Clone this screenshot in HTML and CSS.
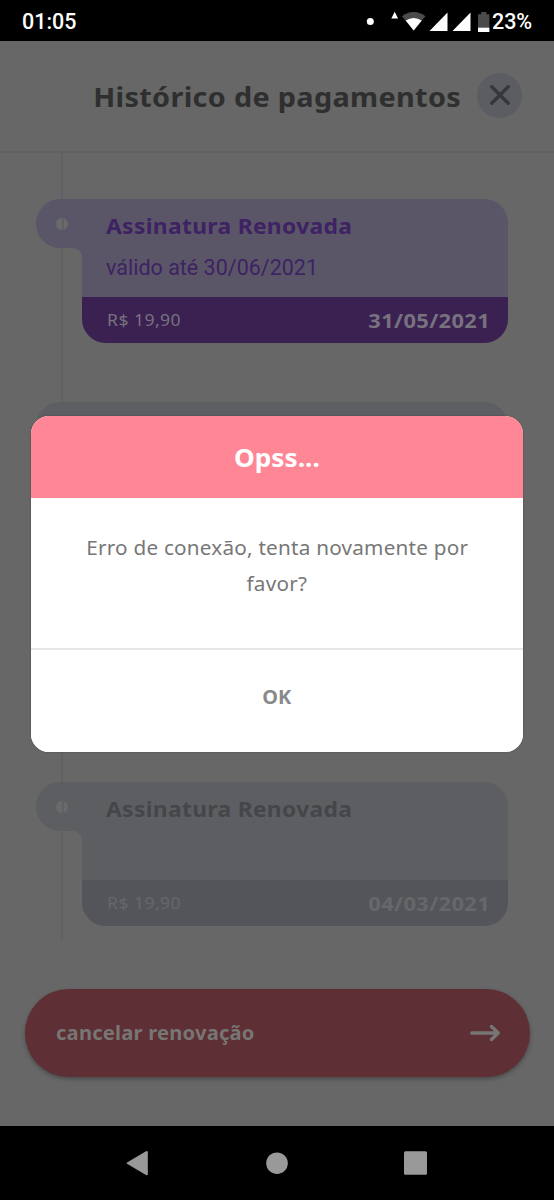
FILE: index.html
```html
<!DOCTYPE html>
<html lang="pt-BR">
<head>
<meta charset="utf-8">
<title>Histórico de pagamentos</title>
<link rel="stylesheet" href="styles.css">
</head>
<body>
<div class="phone">
  <div class="status">
    <span class="clock">01:05</span>
    <svg class="status-icons" width="126" height="24" viewBox="364 9 126 24">
      <circle cx="370.3" cy="20.5" r="3.5" fill="#fff"/>
      <path d="M391.3 17.5l3.4-6.8 3.4 6.8z" fill="#fff"/>
      <path d="M402 15.2q11.7-8.4 23.4 0L413.700 29.500z" fill="#4b4b4b"/>
      <path d="M405.700 19.500q8-5 16 0L413.700 29.500z" fill="#fff"/>
      <path d="M447.500 11.500V30H429.500zM470.500 11.500V30H452.500z" fill="#fff"/>
      <path d="M478 13.300h3.200V11h5.200v2.300h3V27h-11.400z" fill="#4b4b4b"/>
      <path d="M478 26.700h11.400V31H478z" fill="#fff"/>
    </svg>
    <span class="battery">23%</span>
  </div>
  <header class="header">
    <h1 class="title">Histórico de pagamentos</h1>
    <button class="close" aria-label="Fechar">
      <svg width="22" height="22" viewBox="0 0 22 22"><path d="M2.800 2.800l16.400 16.400M19.200 2.800L2.800 19.200" stroke="#36373a" stroke-width="3.400" stroke-linecap="round"/></svg>
    </button>
  </header>
  <main class="content">
    <div class="timeline">
      <article class="card active">
        <div class="tab"><i class="dot"></i></div>
        <div class="panel">
          <div class="info">
            <h2 class="name">Assinatura Renovada</h2>
            <p class="valid">válido até 30/06/2021</p>
          </div>
          <div class="foot"><span class="price">R$ 19,90</span><span class="date">31/05/2021</span></div>
        </div>
      </article>
      <article class="card covered">
        <div class="tab"></div>
        <div class="panel"></div>
      </article>
      <article class="card">
        <div class="tab"><i class="dot"></i></div>
        <div class="panel">
          <div class="info"><h2 class="name">Assinatura Renovada</h2></div>
          <div class="foot"><span class="price">R$ 19,90</span><span class="date">04/03/2021</span></div>
        </div>
      </article>
    </div>
    <button class="cancel">
      <span class="cancel-label">cancelar renovação</span>
      <svg width="30" height="18" viewBox="0 0 30 18"><path d="M1.800 9H28M21.500 2.500L28.200 9l-6.700 6.500" fill="none" stroke="#777674" stroke-width="3.400" stroke-linecap="round" stroke-linejoin="round"/></svg>
    </button>
  </main>
  <nav class="nav">
    <svg width="554" height="74" viewBox="0 0 554 74" fill="#999">
      <path d="M127 36.600l19-11.300q1.800-.8 1.800 1v21.600q0 1.800-1.800 1L127 37.800q-1-.6 0-1.200z"/>
      <circle cx="277" cy="37.200" r="10.800"/>
      <rect x="404" y="25.300" width="23" height="23.500" rx="1.500"/>
    </svg>
  </nav>
  <section class="modal" role="dialog">
    <h2 class="modal-title"><span class="wide">Opss...</span></h2>
    <p class="message"><span class="line">Erro de conexão, tenta novamente por</span><br><span class="line">favor?</span></p>
    <button class="ok"><span class="wide">OK</span></button>
  </section>
</div>
</body>
</html>
```
FILE: styles.css
```css
* { box-sizing: border-box; }
body, h1, h2, p { margin: 0; }
body { background: #666766; font-family: "Noto Sans", sans-serif; }
button { border: 0; padding: 0; font-family: inherit; }
svg { display: block; }

.phone { position: relative; width: 554px; height: 1200px; display: flex; flex-direction: column; overflow: hidden; }

.status { height: 41px; flex: none; background: #000; color: #fff; display: flex; align-items: center; padding: 2px 22px 0 22px; font: 500 21.500px/24px Roboto, sans-serif; }
.status-icons { margin-left: auto; }
.battery { margin-left: 2px; letter-spacing: -.1px; }

.header { height: 112px; flex: none; border-bottom: 2px solid #606164; display: flex; align-items: center; justify-content: flex-end; gap: 16px; padding: 0 32px 2px 0; }
.title { font-size: 26px; line-height: 36px; font-weight: 700; color: #2e2f2e; letter-spacing: .3px; white-space: nowrap; margin-top: 3px; transform: scaleX(1.108); transform-origin: right; }
.close { width: 45px; height: 45px; border-radius: 50%; background: #5c5d62; display: flex; align-items: center; justify-content: center; }

.content { flex: 1; }
.timeline { position: relative; height: 787px; padding: 46px 46px 0 35.500px; }
.timeline::after { content: ""; position: absolute; left: 61px; top: 0; width: 2px; height: 787px; background: #606164; z-index: -1; }

.card { --tint: #5d5e62; --band: #54555b; --ink: #454649; --soft: #666768; display: flex; height: 144px; }
.card.active { --tint: #5a5668; --band: #3a2152; --ink: #3e2263; --soft: #77727e; margin-bottom: 59px; }
.card.covered { margin-bottom: 236px; }
.tab { position: relative; width: 46px; height: 49px; border-radius: 24.500px 0 0 24.500px; background: var(--tint); padding: 18.500px 0 0 20px; }
.tab::after { content: ""; position: absolute; right: 0; top: 49px; width: 9px; height: 9px; background: radial-gradient(circle at 0 100%, transparent 8.500px, var(--tint) 9.200px); }
.dot { display: block; width: 12px; height: 12px; border-radius: 50%; background: linear-gradient(90deg, #6a6a6c 5.500px, #606164 5.500px 7.500px, #6a6a6c 7.500px); }
.panel { flex: 1; border-radius: 0 24px 24px 24px; border-top-left-radius: 0; background: var(--tint); overflow: hidden; display: flex; flex-direction: column; }
.info { flex: 1; padding: 11px 0 0 24.500px; }
.name { font-size: 22px; line-height: 30px; color: var(--ink); letter-spacing: .3px; transform: scaleX(1.038); transform-origin: left; }
.valid { font: 400 21.500px/30px Roboto, sans-serif; color: var(--ink); margin-top: 13px; }
.foot { height: 46px; background: var(--band); color: var(--soft); display: flex; align-items: center; justify-content: space-between; padding: 0 18px 0 25px; }
.price { font-size: 16px; letter-spacing: .4px; transform: scaleX(1.1); transform-origin: left; }
.date { font-size: 18.700px; font-weight: 700; letter-spacing: .3px; transform: scaleX(1.17); transform-origin: right; }

.cancel { width: 505px; height: 88px; margin: 49px 0 0 24.500px; padding: 0 30px 0 31px; border-radius: 44px; background: #5e2f35; box-shadow: 0 2px 4px rgba(0, 0, 0, .3); display: flex; align-items: center; justify-content: space-between; }
.cancel-label { font-size: 19px; line-height: 28px; font-weight: 700; color: #777674; letter-spacing: .2px; transform: scaleX(1.06); transform-origin: left; }

.nav { flex: none; height: 74px; background: #000; }

.modal { position: absolute; left: 31px; top: 416px; width: 492px; height: 336px; border-radius: 18px; background: #fff; overflow: hidden; text-align: center; display: flex; flex-direction: column; box-shadow: 0 0 2px rgba(0, 0, 0, .3); }
.modal-title { height: 81.500px; background: #ff8694; color: #fff; font-size: 25px; line-height: 82px; font-weight: 700; }
.wide { display: inline-block; transform: scaleX(1.05); }
.message { height: 152.500px; padding-top: 32px; border-bottom: 2px solid #e7e7e7; font-size: 19px; line-height: 36px; color: #777; }
.line { display: inline-block; letter-spacing: .2px; transform: scaleX(1.09); }
.ok { flex: 1; background: #fff; color: #8a8a8a; font-size: 19px; line-height: 28px; font-weight: 700; padding-bottom: 8px; }
```
